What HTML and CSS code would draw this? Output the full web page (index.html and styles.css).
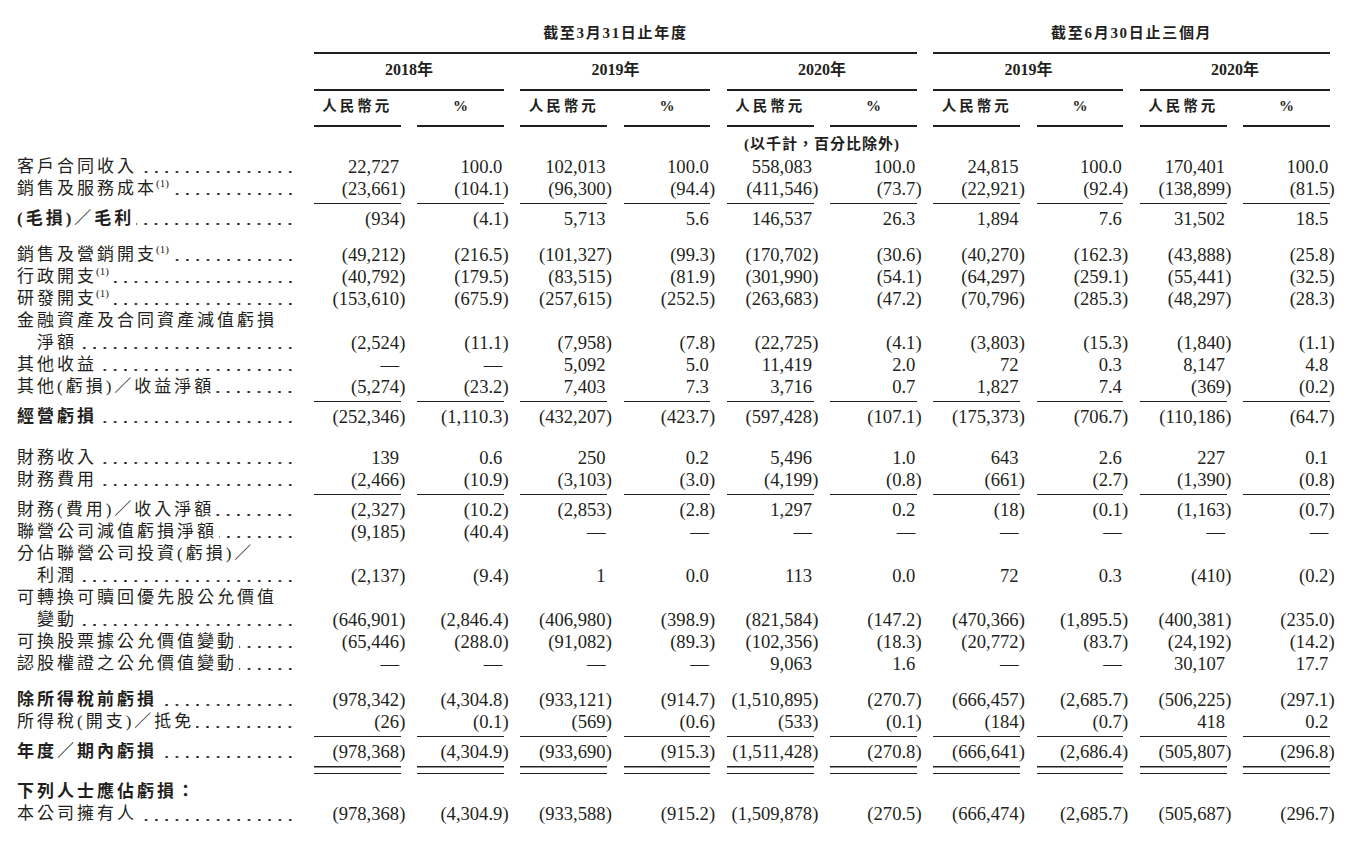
FILE: index.html
```html
<!DOCTYPE html>
<html lang="zh-Hant">
<head>
<meta charset="utf-8">
<title>損益表</title>
<link rel="stylesheet" href="styles.css">
</head>
<body>
<div class="sheet">
  <div class="row hA">
    <div class="g g1">截至3月31日止年度</div>
    <div class="g g2">截至6月30日止三個月</div>
  </div>
  <div class="row hB">
    <div class="y y1">2018年</div>
    <div class="y y2">2019年</div>
    <div class="y y3">2020年</div>
    <div class="y y4">2019年</div>
    <div class="y y5">2020年</div>
  </div>
  <div class="row hC">
    <div></div>
    <div class="c">人民幣元</div><div class="c pc">%</div>
    <div class="c">人民幣元</div><div class="c pc">%</div>
    <div class="c">人民幣元</div><div class="c pc">%</div>
    <div class="c">人民幣元</div><div class="c pc">%</div>
    <div class="c">人民幣元</div><div class="c pc">%</div>
  </div>
  <div class="row hD">
    <div class="unit">(以千計，百分比除外)</div>
  </div>

  <div class="row r first">
    <div class="l"><span class="t">客戶合同收入</span><span class="d"></span></div>
    <div class="n">22,727</div><div class="n">100.0</div><div class="n">102,013</div><div class="n">100.0</div><div class="n">558,083</div><div class="n">100.0</div><div class="n">24,815</div><div class="n">100.0</div><div class="n">170,401</div><div class="n">100.0</div>
  </div>
  <div class="row r ru">
    <div class="l"><span class="t">銷售及服務成本<sup class="s">(1)</sup></span><span class="d"></span></div>
    <div class="n">(23,661<i>)</i></div><div class="n">(104.1<i>)</i></div><div class="n">(96,300<i>)</i></div><div class="n">(94.4<i>)</i></div><div class="n">(411,546<i>)</i></div><div class="n">(73.7<i>)</i></div><div class="n">(22,921<i>)</i></div><div class="n">(92.4<i>)</i></div><div class="n">(138,899<i>)</i></div><div class="n">(81.5<i>)</i></div>
  </div>
  <div class="row r ar">
    <div class="l b"><span class="t">(毛損)／毛利</span><span class="d"></span></div>
    <div class="n">(934<i>)</i></div><div class="n">(4.1<i>)</i></div><div class="n">5,713</div><div class="n">5.6</div><div class="n">146,537</div><div class="n">26.3</div><div class="n">1,894</div><div class="n">7.6</div><div class="n">31,502</div><div class="n">18.5</div>
  </div>

  <div class="row r gs">
    <div class="l"><span class="t">銷售及營銷開支<sup class="s">(1)</sup></span><span class="d"></span></div>
    <div class="n">(49,212<i>)</i></div><div class="n">(216.5<i>)</i></div><div class="n">(101,327<i>)</i></div><div class="n">(99.3<i>)</i></div><div class="n">(170,702<i>)</i></div><div class="n">(30.6<i>)</i></div><div class="n">(40,270<i>)</i></div><div class="n">(162.3<i>)</i></div><div class="n">(43,888<i>)</i></div><div class="n">(25.8<i>)</i></div>
  </div>
  <div class="row r">
    <div class="l"><span class="t">行政開支<sup class="s">(1)</sup></span><span class="d"></span></div>
    <div class="n">(40,792<i>)</i></div><div class="n">(179.5<i>)</i></div><div class="n">(83,515<i>)</i></div><div class="n">(81.9<i>)</i></div><div class="n">(301,990<i>)</i></div><div class="n">(54.1<i>)</i></div><div class="n">(64,297<i>)</i></div><div class="n">(259.1<i>)</i></div><div class="n">(55,441<i>)</i></div><div class="n">(32.5<i>)</i></div>
  </div>
  <div class="row r">
    <div class="l"><span class="t">研發開支<sup class="s">(1)</sup></span><span class="d"></span></div>
    <div class="n">(153,610<i>)</i></div><div class="n">(675.9<i>)</i></div><div class="n">(257,615<i>)</i></div><div class="n">(252.5<i>)</i></div><div class="n">(263,683<i>)</i></div><div class="n">(47.2<i>)</i></div><div class="n">(70,796<i>)</i></div><div class="n">(285.3<i>)</i></div><div class="n">(48,297<i>)</i></div><div class="n">(28.3<i>)</i></div>
  </div>
  <div class="row r">
    <div class="l"><span class="t">金融資產及合同資產減值虧損</span></div>
  </div>
  <div class="row r">
    <div class="l in"><span class="t">淨額</span><span class="d"></span></div>
    <div class="n">(2,524<i>)</i></div><div class="n">(11.1<i>)</i></div><div class="n">(7,958<i>)</i></div><div class="n">(7.8<i>)</i></div><div class="n">(22,725<i>)</i></div><div class="n">(4.1<i>)</i></div><div class="n">(3,803<i>)</i></div><div class="n">(15.3<i>)</i></div><div class="n">(1,840<i>)</i></div><div class="n">(1.1<i>)</i></div>
  </div>
  <div class="row r">
    <div class="l"><span class="t">其他收益</span><span class="d"></span></div>
    <div class="n">—</div><div class="n">—</div><div class="n">5,092</div><div class="n">5.0</div><div class="n">11,419</div><div class="n">2.0</div><div class="n">72</div><div class="n">0.3</div><div class="n">8,147</div><div class="n">4.8</div>
  </div>
  <div class="row r ru">
    <div class="l"><span class="t">其他(虧損)／收益淨額</span><span class="d"></span></div>
    <div class="n">(5,274<i>)</i></div><div class="n">(23.2<i>)</i></div><div class="n">7,403</div><div class="n">7.3</div><div class="n">3,716</div><div class="n">0.7</div><div class="n">1,827</div><div class="n">7.4</div><div class="n">(369<i>)</i></div><div class="n">(0.2<i>)</i></div>
  </div>
  <div class="row r ar">
    <div class="l b"><span class="t">經營虧損</span><span class="d"></span></div>
    <div class="n">(252,346<i>)</i></div><div class="n">(1,110.3<i>)</i></div><div class="n">(432,207<i>)</i></div><div class="n">(423.7<i>)</i></div><div class="n">(597,428<i>)</i></div><div class="n">(107.1<i>)</i></div><div class="n">(175,373<i>)</i></div><div class="n">(706.7<i>)</i></div><div class="n">(110,186<i>)</i></div><div class="n">(64.7<i>)</i></div>
  </div>

  <div class="row r gm">
    <div class="l"><span class="t">財務收入</span><span class="d"></span></div>
    <div class="n">139</div><div class="n">0.6</div><div class="n">250</div><div class="n">0.2</div><div class="n">5,496</div><div class="n">1.0</div><div class="n">643</div><div class="n">2.6</div><div class="n">227</div><div class="n">0.1</div>
  </div>
  <div class="row r ru">
    <div class="l"><span class="t">財務費用</span><span class="d"></span></div>
    <div class="n">(2,466<i>)</i></div><div class="n">(10.9<i>)</i></div><div class="n">(3,103<i>)</i></div><div class="n">(3.0<i>)</i></div><div class="n">(4,199<i>)</i></div><div class="n">(0.8<i>)</i></div><div class="n">(661<i>)</i></div><div class="n">(2.7<i>)</i></div><div class="n">(1,390<i>)</i></div><div class="n">(0.8<i>)</i></div>
  </div>
  <div class="row r ar">
    <div class="l"><span class="t">財務(費用)／收入淨額</span><span class="d"></span></div>
    <div class="n">(2,327<i>)</i></div><div class="n">(10.2<i>)</i></div><div class="n">(2,853<i>)</i></div><div class="n">(2.8<i>)</i></div><div class="n">1,297</div><div class="n">0.2</div><div class="n">(18<i>)</i></div><div class="n">(0.1<i>)</i></div><div class="n">(1,163<i>)</i></div><div class="n">(0.7<i>)</i></div>
  </div>
  <div class="row r">
    <div class="l"><span class="t">聯營公司減值虧損淨額</span><span class="d"></span></div>
    <div class="n">(9,185<i>)</i></div><div class="n">(40.4<i>)</i></div><div class="n">—</div><div class="n">—</div><div class="n">—</div><div class="n">—</div><div class="n">—</div><div class="n">—</div><div class="n">—</div><div class="n">—</div>
  </div>
  <div class="row r">
    <div class="l"><span class="t">分佔聯營公司投資(虧損)／</span></div>
  </div>
  <div class="row r">
    <div class="l in"><span class="t">利潤</span><span class="d"></span></div>
    <div class="n">(2,137<i>)</i></div><div class="n">(9.4<i>)</i></div><div class="n">1</div><div class="n">0.0</div><div class="n">113</div><div class="n">0.0</div><div class="n">72</div><div class="n">0.3</div><div class="n">(410<i>)</i></div><div class="n">(0.2<i>)</i></div>
  </div>
  <div class="row r">
    <div class="l"><span class="t">可轉換可贖回優先股公允價值</span></div>
  </div>
  <div class="row r">
    <div class="l in"><span class="t">變動</span><span class="d"></span></div>
    <div class="n">(646,901<i>)</i></div><div class="n">(2,846.4<i>)</i></div><div class="n">(406,980<i>)</i></div><div class="n">(398.9<i>)</i></div><div class="n">(821,584<i>)</i></div><div class="n">(147.2<i>)</i></div><div class="n">(470,366<i>)</i></div><div class="n">(1,895.5<i>)</i></div><div class="n">(400,381<i>)</i></div><div class="n">(235.0<i>)</i></div>
  </div>
  <div class="row r">
    <div class="l"><span class="t">可換股票據公允價值變動</span><span class="d"></span></div>
    <div class="n">(65,446<i>)</i></div><div class="n">(288.0<i>)</i></div><div class="n">(91,082<i>)</i></div><div class="n">(89.3<i>)</i></div><div class="n">(102,356<i>)</i></div><div class="n">(18.3<i>)</i></div><div class="n">(20,772<i>)</i></div><div class="n">(83.7<i>)</i></div><div class="n">(24,192<i>)</i></div><div class="n">(14.2<i>)</i></div>
  </div>
  <div class="row r">
    <div class="l"><span class="t">認股權證之公允價值變動</span><span class="d"></span></div>
    <div class="n">—</div><div class="n">—</div><div class="n">—</div><div class="n">—</div><div class="n">9,063</div><div class="n">1.6</div><div class="n">—</div><div class="n">—</div><div class="n">30,107</div><div class="n">17.7</div>
  </div>

  <div class="row r gs">
    <div class="l b"><span class="t">除所得稅前虧損</span><span class="d"></span></div>
    <div class="n">(978,342<i>)</i></div><div class="n">(4,304.8<i>)</i></div><div class="n">(933,121<i>)</i></div><div class="n">(914.7<i>)</i></div><div class="n">(1,510,895<i>)</i></div><div class="n">(270.7<i>)</i></div><div class="n">(666,457<i>)</i></div><div class="n">(2,685.7<i>)</i></div><div class="n">(506,225<i>)</i></div><div class="n">(297.1<i>)</i></div>
  </div>
  <div class="row r ru">
    <div class="l"><span class="t">所得稅(開支)／抵免</span><span class="d"></span></div>
    <div class="n">(26<i>)</i></div><div class="n">(0.1<i>)</i></div><div class="n">(569<i>)</i></div><div class="n">(0.6<i>)</i></div><div class="n">(533<i>)</i></div><div class="n">(0.1<i>)</i></div><div class="n">(184<i>)</i></div><div class="n">(0.7<i>)</i></div><div class="n">418</div><div class="n">0.2</div>
  </div>
  <div class="row r ar dbl">
    <div class="l b"><span class="t">年度／期內虧損</span><span class="d"></span></div>
    <div class="n">(978,368<i>)</i></div><div class="n">(4,304.9<i>)</i></div><div class="n">(933,690<i>)</i></div><div class="n">(915.3<i>)</i></div><div class="n">(1,511,428<i>)</i></div><div class="n">(270.8<i>)</i></div><div class="n">(666,641<i>)</i></div><div class="n">(2,686.4<i>)</i></div><div class="n">(505,807<i>)</i></div><div class="n">(296.8<i>)</i></div>
  </div>

  <div class="row r ad">
    <div class="l b"><span class="t">下列人士應佔虧損：</span></div>
  </div>
  <div class="row r">
    <div class="l"><span class="t">本公司擁有人</span><span class="d"></span></div>
    <div class="n">(978,368<i>)</i></div><div class="n">(4,304.9<i>)</i></div><div class="n">(933,588<i>)</i></div><div class="n">(915.2<i>)</i></div><div class="n">(1,509,878<i>)</i></div><div class="n">(270.5<i>)</i></div><div class="n">(666,474<i>)</i></div><div class="n">(2,685.7<i>)</i></div><div class="n">(505,687<i>)</i></div><div class="n">(296.7<i>)</i></div>
  </div>
</div>
</body>
</html>
```

FILE: styles.css
```css
* {
  box-sizing: border-box;
  margin: 0;
  padding: 0;
}

html, body {
  background: #ffffff;
}

body {
  color: #231f20;
  font-family: "Liberation Serif", "Noto Sans CJK TC", serif;
}

.sheet {
  width: 1358px;
  padding: 23px 0 0 17px;
}

.row {
  display: grid;
  grid-template-columns: 280.4px repeat(10, 86.67px);
  column-gap: 16.6px;
}

/* ---------- header ---------- */
.hA {
  font-size: 15px;
  font-weight: 700;
  line-height: 20px;
  letter-spacing: 1.7px;
  text-align: center;
}
.hA .g {
  padding-bottom: 9px;
  border-bottom: 2px solid #231f20;
}
.hA .g1 { grid-column: 2 / span 6; }
.hA .g2 { grid-column: 8 / span 4; }

.hB {
  font-size: 16px;
  font-weight: 700;
  line-height: 20px;
  text-align: center;
}
.hB .y {
  padding-top: 5.5px;
  padding-bottom: 9px;
  border-bottom: 2px solid #231f20;
}
.hB .y1 { grid-column: 2 / span 2; }
.hB .y2 { grid-column: 4 / span 2; }
.hB .y3 { grid-column: 6 / span 2; }
.hB .y4 { grid-column: 8 / span 2; }
.hB .y5 { grid-column: 10 / span 2; }

.hC .c {
  font-size: 14.5px;
  font-weight: 700;
  line-height: 20px;
  letter-spacing: 3px;
  text-align: center;
  padding-top: 5.5px;
  padding-bottom: 8.5px;
  border-bottom: 2px solid #231f20;
}
.hC .pc {
  font-size: 15px;
  letter-spacing: 0;
}

.hD {
  padding-top: 7px;
}
.hD .unit {
  grid-column: 6 / span 2;
  font-size: 15px;
  font-weight: 700;
  line-height: 20px;
  letter-spacing: 1px;
  text-align: center;
}

/* ---------- body rows ---------- */
.l {
  height: 22px;
  display: flex;
  align-items: baseline;
  font-size: 17px;
  line-height: 22px;
  letter-spacing: 3px;
  white-space: nowrap;
  font-weight: 400;
}
.l.b {
  font-weight: 700;
}
.l.in {
  padding-left: 20px;
}
.l .t {
  flex: none;
}
/* dot leader */
.l .d {
  flex: 1;
  align-self: stretch;
  min-width: 0;
  margin-left: 2px;
  background-image: radial-gradient(circle, #231f20 0.95px, rgba(35, 31, 32, 0) 1.35px);
  background-size: 10.3px 4px;
  background-repeat: repeat-x;
  background-position: right 2px top 14.5px;
}
.s {
  font-size: 11px;
  line-height: 0;
  vertical-align: 7px;
  letter-spacing: 0;
  font-weight: 400;
  margin-left: -1px;
}

.n {
  font-size: 18.6px;
  line-height: 22px;
  text-align: right;
  padding-right: 1.5px;
  white-space: nowrap;
}
.n i {
  font-style: normal;
  margin-right: -0.333em;
}

.first { margin-top: 2px; }
.ar { margin-top: 4px; }
.gs { margin-top: 14px; }
.gm { margin-top: 19px; }
.ad { margin-top: 7px; }

.ru .n {
  padding-bottom: 3px;
  border-bottom: 1.5px solid #231f20;
}

.dbl .n {
  padding-bottom: 11.5px;
  background-image:
    linear-gradient(#231f20, #231f20),
    linear-gradient(#231f20, #231f20);
  background-repeat: no-repeat;
  background-size: 100% 1.5px, 100% 1.5px;
  background-position: 0 100%, 0 calc(100% - 7px);
}
```
